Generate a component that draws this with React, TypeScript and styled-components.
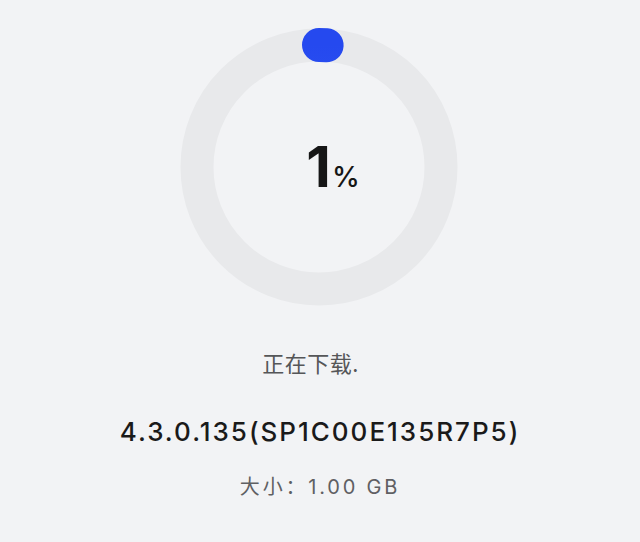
import React from "react";
import styled, { createGlobalStyle } from "styled-components";

const GlobalStyle = createGlobalStyle`
  html, body {
    margin: 0;
    padding: 0;
    background: #f2f3f5;
  }
  body {
    font-family: Inter, "Noto Sans CJK SC", sans-serif;
  }
`;

const Page = styled.div`
  width: 640px;
  height: 542px;
  display: flex;
  flex-direction: column;
  align-items: center;
  padding-top: 27px;
  box-sizing: border-box;
  background: #f2f3f5;
  overflow: hidden;
`;

const RingWrap = styled.div`
  position: relative;
  width: 280px;
  height: 280px;
  margin-left: -3px;
`;

const Center = styled.div`
  position: absolute;
  inset: 0;
  display: flex;
  align-items: center;
  justify-content: center;
  padding-left: 29px;
  padding-bottom: 2px;
`;

const Percent = styled.div`
  display: flex;
  align-items: baseline;
  color: #161616;
`;

const Value = styled.span`
  font-size: 57px;
  font-weight: 700;
  line-height: 1;
  letter-spacing: -2px;
`;

const Unit = styled.span`
  font-size: 28px;
  font-weight: 500;
  margin-left: 3px;
`;

const Status = styled.div`
  margin-top: 40px;
  padding-right: 19px;
  font-size: 22px;
  line-height: 30px;
  letter-spacing: 0.5px;
  color: #555658;
  font-family: "Noto Sans CJK SC", sans-serif;
`;

const Version = styled.div`
  margin-top: 38px;
  font-size: 26px;
  font-weight: 500;
  line-height: 34px;
  letter-spacing: 2px;
  color: #1a1a1a;
`;

const Size = styled.div`
  margin-top: 24px;
  font-size: 20px;
  line-height: 28px;
  letter-spacing: 2.8px;
  color: #5f6063;
`;

function ProgressRing({ progress }: { progress: number }) {
  const r = 122;
  const c = 2 * Math.PI * r;
  return (
    <svg width="280" height="280" viewBox="0 0 280 280">
      <defs>
        <linearGradient id="dot" x1="0" x2="1" y1="0" y2="0">
          <stop offset="0" stopColor="#3f68f8" />
          <stop offset="1" stopColor="#2549ef" />
        </linearGradient>
      </defs>
      <circle cx="140" cy="140" r={r} fill="none" stroke="#e8e9eb" strokeWidth="33" />
      <circle
        cx="140"
        cy="140"
        r={r}
        fill="none"
        stroke="url(#dot)"
        strokeWidth="34"
        strokeLinecap="round"
        strokeDasharray={`${(c * progress) / 100} ${c}`}
        transform="rotate(-90 140 140)"
      />
    </svg>
  );
}

export default function App() {
  return (
    <Page>
      <GlobalStyle />
      <RingWrap>
        <ProgressRing progress={1} />
        <Center>
          <Percent>
            <Value>1</Value>
            <Unit>%</Unit>
          </Percent>
        </Center>
      </RingWrap>
      <Status>正在下载.</Status>
      <Version>4.3.0.135(SP1C00E135R7P5)</Version>
      <Size>大小：1.00 GB</Size>
    </Page>
  );
}
